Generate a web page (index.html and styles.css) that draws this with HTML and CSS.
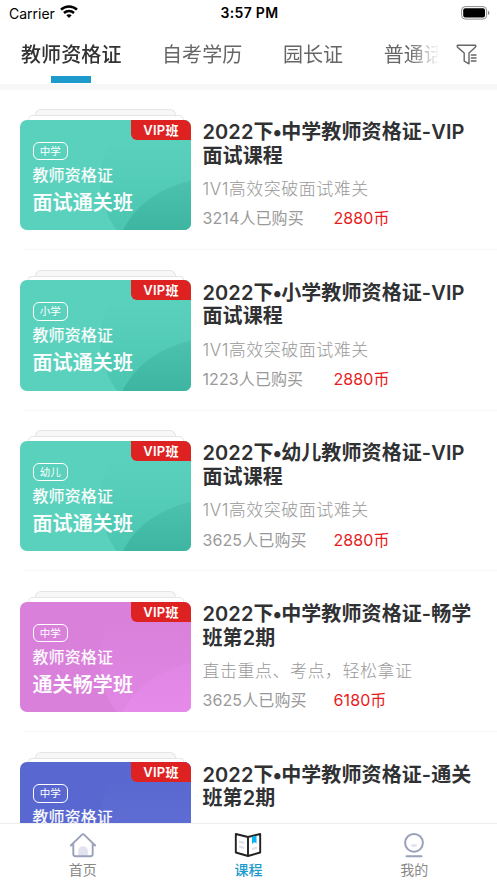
FILE: index.html
```html
<!DOCTYPE html>
<html lang="zh-CN">
<head>
<meta charset="utf-8">
<title>课程</title>
<link rel="stylesheet" href="styles.css">
</head>
<body>
<div class="app">
  <header class="status">
    <div class="carrier"><span>Carrier</span>
      <svg width="18" height="13" viewBox="0 0 18 13" fill="none" stroke="#000" stroke-width="2.5"><path d="M1 4.7C5.4.4 12.600.4 17 4.700"/><path d="M4 8C6.800 5.300 11.200 5.300 14 8"/><path d="M9 12.900L6.300 10.300C7.800 8.900 10.200 8.900 11.700 10.300Z" fill="#000" stroke="none"/></svg>
    </div>
    <div class="clock">3:57 PM</div>
    <svg class="battery" width="29" height="14" viewBox="0 0 29 14"><rect x=".6" y=".6" width="25" height="12.500" rx="3.600" fill="none" stroke="#8c8c8c"/><rect x="2.200" y="2.200" width="21.800" height="9.300" rx="2" fill="#000"/><path d="M27 4.700Q28.500 5.300 28.500 6.900T27 9.100Z" fill="#8c8c8c"/></svg>
  </header>
  <nav class="tabs">
    <div class="tablist">
      <span class="tab active">教师资格证</span><span class="tab">自考学历</span><span class="tab">园长证</span><span class="tab">普通话</span>
    </div>
    <svg class="filter" width="22" height="22" viewBox="0 0 22 22" fill="none" stroke="#666" stroke-width="1.400" stroke-linejoin="round" stroke-linecap="round"><path d="M1.500 1.200H19.500Q20.200 2.500 19 3.600L13 9V19.800L8.200 17.200V9L2 3.600Q.7 2.400 1.500 1.200Z"/><path d="M15.300 11H20M15.300 14H20M15.300 17H20"/></svg>
  </nav>
  <main class="list">
    <article class="row"><div class="cover green"><div class="sheet back"></div><div class="sheet mid"></div><div class="card"><b class="vip">VIP班</b><span class="level">中学</span><p class="subject">教师资格证</p><p class="course">面试通关班</p></div></div><div class="info"><h2>2022下<i>•</i>中学教师资格证-VIP<br>面试课程</h2><p class="desc">1V1高效突破面试难关</p><p class="meta"><span>3214人已购买</span><em>2880币</em></p></div></article>
    <article class="row"><div class="cover green"><div class="sheet back"></div><div class="sheet mid"></div><div class="card"><b class="vip">VIP班</b><span class="level">小学</span><p class="subject">教师资格证</p><p class="course">面试通关班</p></div></div><div class="info"><h2>2022下<i>•</i>小学教师资格证-VIP<br>面试课程</h2><p class="desc">1V1高效突破面试难关</p><p class="meta"><span>1223人已购买</span><em>2880币</em></p></div></article>
    <article class="row"><div class="cover green"><div class="sheet back"></div><div class="sheet mid"></div><div class="card"><b class="vip">VIP班</b><span class="level">幼儿</span><p class="subject">教师资格证</p><p class="course">面试通关班</p></div></div><div class="info"><h2>2022下<i>•</i>幼儿教师资格证-VIP<br>面试课程</h2><p class="desc">1V1高效突破面试难关</p><p class="meta"><span>3625人已购买</span><em>2880币</em></p></div></article>
    <article class="row"><div class="cover pink"><div class="sheet back"></div><div class="sheet mid"></div><div class="card"><b class="vip">VIP班</b><span class="level">中学</span><p class="subject">教师资格证</p><p class="course">通关畅学班</p></div></div><div class="info"><h2>2022下<i>•</i>中学教师资格证-畅学<br>班第2期</h2><p class="desc">直击重点、考点，轻松拿证</p><p class="meta"><span>3625人已购买</span><em>6180币</em></p></div></article>
    <article class="row"><div class="cover blue"><div class="sheet back"></div><div class="sheet mid"></div><div class="card"><b class="vip">VIP班</b><span class="level">中学</span><p class="subject">教师资格证</p></div></div><div class="info"><h2>2022下<i>•</i>中学教师资格证-通关<br>班第2期</h2></div></article>
  </main>
  <footer class="bottom">
    <div class="item"><svg width="28" height="28" viewBox="0 0 28 28" fill="none" stroke="#99a1bb" stroke-width="1.900" stroke-linecap="round" stroke-linejoin="round"><path d="M9.200 24.500V19a4.800 4.800 0 0 1 9.600 0V24.500Z" fill="#e3e2f0" stroke="none"/><path d="M1.800 13.500L13 2.600Q14 1.800 15 2.600L26.200 13.500M4.300 12V22Q4.300 24.200 6.500 24.200H21.500Q23.700 24.200 23.700 22V12"/></svg><span>首页</span></div>
    <div class="item on"><svg width="28" height="28" viewBox="0 0 28 28" fill="none" stroke="#222" stroke-width="1.900" stroke-linejoin="round"><path d="M1.800 2L14 5V24L1.800 20.500ZM14 5L26.200 2V20.500L14 24Z"/><path d="M18 4.800L22.500 3.700V11.500L20.200 10L18 12.300Z" fill="#08b4f5" stroke="none"/><path d="M5 9.500L10 11M5 14.500L10 16M18 17L23 15.500" stroke="#dedeed"/></svg><span>课程</span></div>
    <div class="item"><svg width="28" height="28" viewBox="0 0 28 28" fill="none" stroke="#99a1bb" stroke-width="2" stroke-linecap="round"><circle cx="14" cy="10.800" r="8.900"/><path d="M6.500 24.200H21.500"/><path d="M12.500 13.600H15.500" stroke="#e3e2f0" stroke-width="2.800"/></svg><span>我的</span></div>
  </footer>
</div>
</body>
</html>
```
FILE: styles.css
```css
* { box-sizing: border-box; }
body { margin: 0; background: #fff; color: #303133; font-family: Inter, "Noto Sans CJK SC", sans-serif; }
p, h2 { margin: 0; }
.app { width: 497px; height: 883px; display: flex; flex-direction: column; overflow: hidden; }
.status { height: 26px; flex: none; display: grid; grid-template-columns: 1fr auto 1fr; align-items: center; padding: 0 7px 0 9px; color: #000; }
.carrier { display: flex; align-items: center; gap: 5px; font-size: 14px; }
.carrier svg { margin-top: -3px; }
.clock { font-size: 14px; font-weight: 600; letter-spacing: .3px; margin-top: -1px; }
.battery { justify-self: end; margin-top: -1px; }
.tabs { height: 64px; flex: none; display: flex; border-bottom: 6px solid #f7f7f7; padding-left: 21px; }
.tablist { width: 418px; display: flex; gap: 40.500px; overflow: hidden; white-space: nowrap; -webkit-mask-image: linear-gradient(90deg, #000 388px, transparent 418px); mask-image: linear-gradient(90deg, #000 388px, transparent 418px); }
.tab { flex: none; font-size: 20px; line-height: 58px; color: #666; letter-spacing: .1px; position: relative; }
.active { font-weight: 500; color: #333; }
.active::after { content: ""; position: absolute; width: 40px; height: 7px; left: 30px; top: 50px; background: #1b9acb; }
.filter { margin: 18px 0 0 17px; }
.list { flex: 1; min-height: 0; overflow: hidden; }
.row { height: 160.700px; display: flex; gap: 11.500px; padding: 19px 0 0 20px; background: linear-gradient(#f7f7f7, #f7f7f7) 23px 159px / 474px 1px no-repeat; }
.cover { width: 171px; flex: none; display: flex; flex-direction: column; align-items: center; }
.sheet { border: 1px solid #e5e5e5; border-bottom: 0; background: #f7f7f7; border-radius: 8px 8px 0 0; }
.back { width: 141px; height: 6px; }
.mid { width: 156px; height: 4.500px; background: #fff; }
.card { position: relative; isolation: isolate; width: 171px; height: 110.500px; border-radius: 7px; overflow: hidden; display: flex; flex-direction: column; align-items: flex-start; padding: 22px 0 0 12.500px; color: #fff; }
.card::before, .card::after { content: ""; position: absolute; z-index: -1; border-radius: 50%; }
.card::before { left: 80px; top: -24px; width: 168px; height: 168px; }
.card::after { left: 96px; top: 58px; width: 202px; height: 164px; }
.green .card { background: #5ad1bc; }
.green .card::before { background: linear-gradient(#5ad1bc 25%, #4bc5b0 85%); }
.green .card::after { background: linear-gradient(#4dc3af, #3db5a1 32%); }
.pink .card { background: #d980db; }
.pink .card::before { background: linear-gradient(#d980db 25%, #e088e3 85%); }
.pink .card::after { background: linear-gradient(#df85e2, #e78bea 32%); }
.blue .card { background: #5968d0; }
.blue .card::before { background: linear-gradient(#5968d0 20%, #6371d7 85%); }
.blue .card::after { background: #6675dc; }
.vip { position: absolute; right: 0; top: 0; width: 60px; height: 20px; background: #de2222; border-radius: 0 0 0 6px; font-size: 13px; line-height: 20px; text-align: center; letter-spacing: .3px; font-weight: 600; }
.level { width: 35.500px; height: 18.500px; border: 1px solid #fff; border-radius: 6px; font-size: 10.500px; line-height: 17px; text-align: center; }
.subject { font-size: 16px; line-height: 24px; margin-top: 2.500px; letter-spacing: .1px; -webkit-text-stroke: .2px; }
.course { font-size: 20px; line-height: 28px; margin-top: 2px; font-weight: 500; letter-spacing: .1px; -webkit-text-stroke: .2px; }
.info { padding-top: 12px; white-space: nowrap; }
h2 { font-size: 20px; line-height: 23.700px; font-weight: 600; letter-spacing: .1px; font-family: Inter, "Noto Sans CJK SC", sans-serif; }
h2 i { font-style: normal; margin: 0 -1.300px; }
.desc { font-size: 17px; line-height: 24px; color: #999; font-weight: 300; margin-top: 8.500px; letter-spacing: .5px; }
.meta { font-size: 16px; line-height: 24px; color: #999; margin-top: 5.500px; display: flex; letter-spacing: .1px; }
.meta span { width: 131px; }
.meta em { font-style: normal; color: #e61c1c; }
.bottom { height: 60px; flex: none; border-top: 1px solid #eee; display: grid; grid-template-columns: repeat(3, 1fr); background: #fff; }
.item { display: flex; flex-direction: column; align-items: center; padding-top: 8px; font-size: 14px; line-height: 20px; color: #888; }
.on { color: #1b9acb; font-weight: 500; }
```
